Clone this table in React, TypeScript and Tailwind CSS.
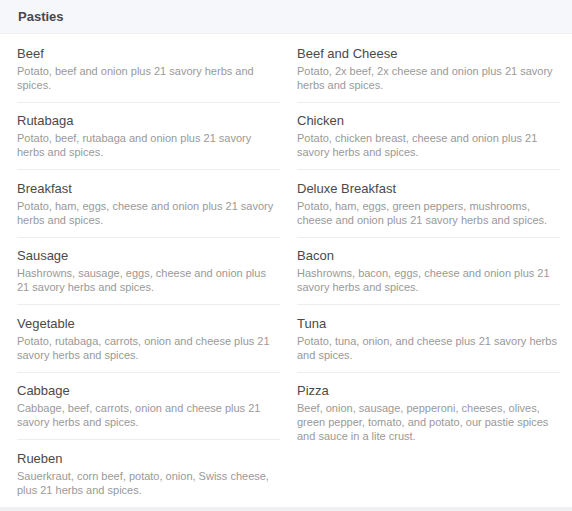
const left = [
  { name: "Beef", desc: "Potato, beef and onion plus 21 savory herbs and spices." },
  { name: "Rutabaga", desc: "Potato, beef, rutabaga and onion plus 21 savory herbs and spices." },
  { name: "Breakfast", desc: "Potato, ham, eggs, cheese and onion plus 21 savory herbs and spices." },
  { name: "Sausage", desc: "Hashrowns, sausage, eggs, cheese and onion plus 21 savory herbs and spices." },
  { name: "Vegetable", desc: "Potato, rutabaga, carrots, onion and cheese plus 21 savory herbs and spices." },
  { name: "Cabbage", desc: "Cabbage, beef, carrots, onion and cheese plus 21 savory herbs and spices." },
  { name: "Rueben", desc: "Sauerkraut, corn beef, potato, onion, Swiss cheese, plus 21 herbs and spices." },
];

const right = [
  { name: "Beef and Cheese", desc: "Potato, 2x beef, 2x cheese and onion plus 21 savory herbs and spices." },
  { name: "Chicken", desc: "Potato, chicken breast, cheese and onion plus 21 savory herbs and spices." },
  { name: "Deluxe Breakfast", desc: "Potato, ham, eggs, green peppers, mushrooms, cheese and onion plus 21 savory herbs and spices." },
  { name: "Bacon", desc: "Hashrowns, bacon, eggs, cheese and onion plus 21 savory herbs and spices." },
  { name: "Tuna", desc: "Potato, tuna, onion, and cheese plus 21 savory herbs and spices." },
  { name: "Pizza", desc: "Beef, onion, sausage, pepperoni, cheeses, olives, green pepper, tomato, and potato, our pastie spices and sauce in a lite crust." },
];

function Item({ name, desc, last }: { name: string; desc: string; last: boolean }) {
  return (
    <div className={`pt-[10.5px] pb-[10px] ${last ? "" : "border-b border-[#ededed]"}`}>
      <div className="text-[13px] leading-[16px] text-[#4a4a4a]">{name}</div>
      <div className="mt-[2px] text-[11px] leading-[14px] text-[#999999]">{desc}</div>
    </div>
  );
}

export default function App() {
  return (
    <div className="w-[572px] h-[511px] bg-white flex flex-col font-['Liberation_Sans',Arial,sans-serif] overflow-hidden">
      <div className="h-[34px] shrink-0 bg-[#f6f7fa] border-b border-[#eeeef0] flex items-center px-[18px]">
        <h2 className="text-[13px] font-bold text-[#48484f]">Pasties</h2>
      </div>
      <div className="flex-1 grid grid-cols-2 gap-x-[17px] pt-[1px] pl-[17px] pr-[12px]">
        <div className="flex flex-col">
          {left.map((it, i) => (
            <Item key={it.name} {...it} last={i === left.length - 1} />
          ))}
        </div>
        <div className="flex flex-col">
          {right.map((it, i) => (
            <Item key={it.name} {...it} last={i === right.length - 1} />
          ))}
        </div>
      </div>
      <div className="h-[4px] shrink-0 bg-[#f0f0f2]" />
    </div>
  );
}
